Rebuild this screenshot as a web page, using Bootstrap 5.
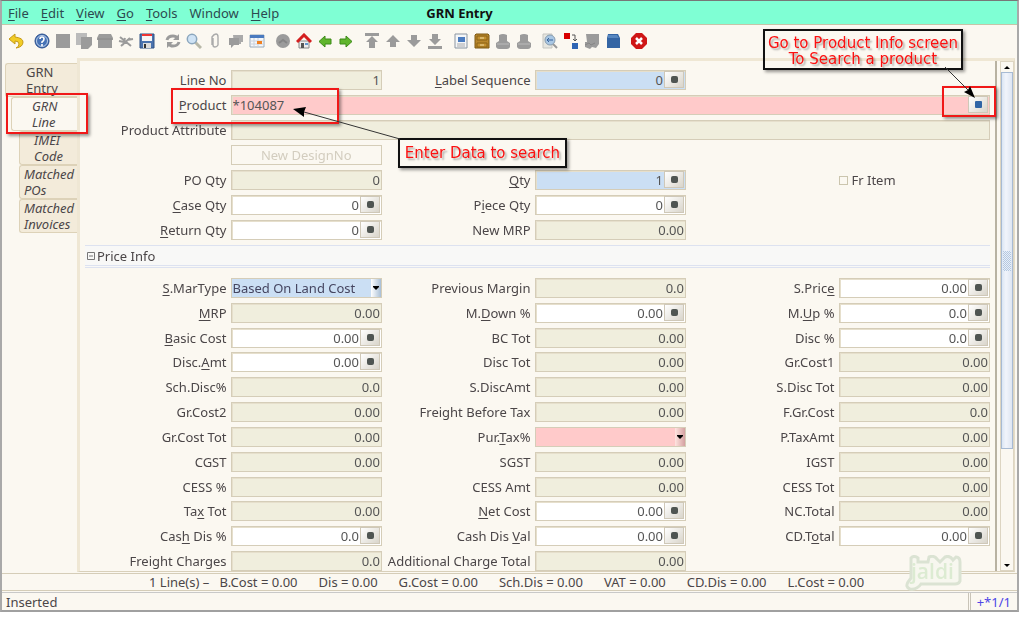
<!DOCTYPE html>
<html lang="en">
<head>
<meta charset="utf-8">
<meta name="viewport" content="width=device-width, initial-scale=1">
<title>GRN Entry</title>
<link href="https://cdn.jsdelivr.net/npm/bootstrap@5.3.0/dist/css/bootstrap.min.css" rel="stylesheet">
<style>
:root{--paper:#fbf8f1;--line:#d5cdb8;--sand:#efe7d4;--read:#f0eedd;--need:#ffcaca;--pick:#cbdff4;--ink:#4b4648}
body{font-family:"Noto Sans","Open Sans",sans-serif;font-size:13px;line-height:16px;color:var(--ink);background:#fff}
.app-window{min-height:calc(100vh - 6px);margin:0 5px 6px 0;background:var(--paper);border:1px solid #777;border-left:2px solid #a9a9a9;border-right:2px solid #a9a9a9;border-bottom:2px solid #a0a0a0}
.menu-strip{background:#7fffd4;height:24px;border-bottom:1px solid #c5c5a8;padding-left:6px}
.menu-strip a{color:#2d4a50;text-decoration:none}
u{text-underline-offset:2px}
.app-title{left:0;right:100px;top:3px;font-size:13px;line-height:18px;color:#111;pointer-events:none}
.tool-strip{height:33px;gap:10px;padding:0 6px 2px}
.tool-set{gap:5px}
.tool-btn{width:16px;height:16px;padding:0;border:0;background:none;display:flex}
.side-tabs{width:75px;padding-left:3px;padding-top:5px}
.side-tab{display:block;line-height:16px;height:34px;background:#f3ebda;border:1px solid #ddd2b8;border-right:0;border-radius:3px 0 0 3px;color:var(--ink);text-decoration:none;white-space:nowrap}
.side-tab.lvl0{padding-left:20px}
.side-tab.lvl1{margin-left:6px;padding-left:20px;background:var(--paper);font-style:italic}
.side-tab.lvl2{margin-left:14px;padding-left:4px;font-style:italic}
.side-tab.deep{padding-left:14px}
.work-panel{border:1px solid #d9d0ba;border-left:3px solid var(--sand);border-top:3px solid var(--sand);border-right-color:#e4dcc8;min-width:0;margin-right:2px}
.form-area{padding:9px 5px 0 2px;border-right:2px solid #b8b2a2}
.field-grid{display:grid;grid-template-columns:repeat(3,145fr 152fr);column-gap:4px;row-gap:5px;grid-auto-rows:20px}
.price-grid{row-gap:0;align-content:space-between}
.field-grid label{text-align:right;white-space:nowrap;line-height:20px}
.wide{grid-column:2/-1}
.box{display:flex;min-width:0;height:20px;border:1px solid var(--line);background:var(--read);box-shadow:inset 1px 1px #e6dfcc}
.box input{flex:1;min-width:0;width:0;border:0;background:none;padding:0 1px;text-align:right;font:inherit;color:#555;outline:0;line-height:18px}
.box.edit{background:#fff}.box.pick{background:var(--pick)}.box.need{background:var(--need)}
.box.need input{text-align:left}
.calc{width:20px;flex:none;border:1px solid #cfc8b8;background:linear-gradient(135deg,#fff,#d9d5cb);padding:0;margin:0 1px 1px 0;display:flex;align-items:center;justify-content:center}
.calc i{width:7px;height:7px;border-radius:2px;background:#4f5552}
.calc.prod i{background:#2f64a5;border-radius:1px}
.combo{height:20px;width:100%;appearance:none;border:1px solid var(--line);border-radius:0;padding:0 12px 0 1px;font:inherit;color:#454560;background:url("data:image/svg+xml,%3Csvg xmlns='http://www.w3.org/2000/svg' width='10' height='18'%3E%3Cpath d='M2 7h6v1L5 11 2 8z'/%3E%3C/svg%3E") right/10px 18px no-repeat,linear-gradient(90deg,#fff,#a9bfd6) right/10px 18px no-repeat,var(--pick);opacity:1}
.combo.red{background:url("data:image/svg+xml,%3Csvg xmlns='http://www.w3.org/2000/svg' width='10' height='18'%3E%3Cpath d='M2 7h6v1L5 11 2 8z'/%3E%3C/svg%3E") right/10px 18px no-repeat,linear-gradient(90deg,#ffe4e0,#d4a0a0) right/10px 18px no-repeat,var(--need)}
.plain-btn{border:1px solid var(--line);background:none;color:#d3cdbf;height:20px;padding:0;line-height:18px}
.plain-check{line-height:20px;gap:4px}
.plain-check input{appearance:none;width:9px;height:9px;border:1px solid #cbc5ae;margin:0}
.section-head{height:23px;margin:5px 0 10px 3px;border-top:1px solid #dde2f0;border-bottom:3px double #dde2f0;background:#f8f8f7;gap:2px;padding-left:2px}
.section-head button{border:0;background:none;padding:0;display:flex}
.scroll-rail{width:14px;margin-left:3px;border:1px solid #ddd5c2}
.scroll-rail button{height:10px;border:0;padding:0;background:var(--paper);display:flex;justify-content:center;align-items:center}
.rail-thumb{flex:376;background:linear-gradient(90deg,#dbe6f4,#f1f4fb 40%,#dde5f2);border:1px solid #a7bad3}
.rail-grip{width:8px;height:20px;background:repeating-conic-gradient(#b4c8e0 0 25%,#e8eef8 0 50%) 0/2px 2px}
.rail-rest{flex:111}
.sum-strip{height:18px;margin-top:1px;border-top:1px solid var(--line);border-bottom:1px solid var(--line);padding-left:147px;gap:21px;line-height:17px;white-space:nowrap}
.foot-strip{margin-top:1px;border-top:1px solid #c9c9c9;height:18px;line-height:18px}
.foot-strip .foot-count{border-left:3px double #c9c4b8;color:#4d45e6;padding:0 6px}
/* notes drawn over the form */
.note-frame{position:absolute;border:2px solid #f01818;box-shadow:2px 2px 3px #0006;pointer-events:none}
.note-text{position:absolute;border:2px solid #111;box-shadow:2px 2px 3px #0006;color:#fb1010;font:15px/16px "DejaVu Sans",sans-serif;text-align:center;text-shadow:2px 2px 2px #0005;white-space:nowrap}
.note-arrow{position:absolute;pointer-events:none}
.n-tab{left:4px;top:92px;width:82px;height:41px}
.n-product{left:169px;top:87px;width:168px;height:36px}
.n-button{right:21px;top:85px;width:54px;height:31px}
.n-enter{left:396px;top:137px;width:169px;height:30px;line-height:27px}
.n-goto{right:54px;top:28px;width:200px;height:41px;padding-top:4px}
.a-enter{left:288px;top:98px}
.a-goto{right:36px;top:64px}
.brand-mark{position:absolute;right:55px;bottom:19px}
</style>
<script src="https://cdn.jsdelivr.net/npm/bootstrap@5.3.0/dist/js/bootstrap.bundle.min.js"></script>
</head>
<body>
<div class="app-window d-flex flex-column position-relative">
  <nav class="menu-strip d-flex align-items-center position-relative" aria-label="Menu">
    <div class="d-flex" id="menus"></div>
    <h1 class="app-title position-absolute text-center fw-bold m-0">GRN Entry</h1>
  </nav>
  <div class="tool-strip d-flex align-items-center" role="toolbar" id="tools"></div>

  <div class="d-flex flex-grow-1">
    <nav class="side-tabs flex-shrink-0" aria-label="Tabs">
      <a href="#" class="side-tab lvl0">GRN<br>Entry</a>
      <a href="#" class="side-tab lvl1">GRN<br>Line</a>
      <a href="#" class="side-tab lvl2 deep">IMEI<br>Code</a>
      <a href="#" class="side-tab lvl2">Matched<br>POs</a>
      <a href="#" class="side-tab lvl2">Matched<br>Invoices</a>
    </nav>
    <main class="work-panel d-flex flex-grow-1">
      <form class="form-area d-flex flex-column flex-grow-1">
        <div class="field-grid" id="lineGrid"></div>
        <div class="section-head d-flex align-items-center">
          <button type="button" aria-label="Collapse"><svg width="8" height="8"><path d="M.5.5h7v7h-7zM2 4h4" fill="none" stroke="#777"/></svg></button>
          <span>Price Info</span>
        </div>
        <div class="field-grid price-grid flex-grow-1" id="priceGrid"></div>
      </form>
      <div class="scroll-rail d-flex flex-column">
        <button type="button" aria-label="Scroll up"><svg width="8" height="5"><path d="M1 4h6L4 1z"/></svg></button>
        <div class="rail-thumb d-flex align-items-center justify-content-center"><span class="rail-grip"></span></div>
        <div class="rail-rest"></div>
        <button type="button" aria-label="Scroll down"><svg width="8" height="5"><path d="M1 1h6L4 4z"/></svg></button>
      </div>
    </main>
  </div>

  <div class="sum-strip d-flex">
    <span>1 Line(s) –&nbsp;&nbsp; B.Cost = 0.00</span><span>Dis = 0.00</span><span>G.Cost = 0.00</span><span>Sch.Dis = 0.00</span><span>VAT = 0.00</span><span>CD.Dis = 0.00</span><span>L.Cost = 0.00</span>
  </div>
  <footer class="foot-strip d-flex justify-content-between">
    <span class="ps-1">Inserted</span><span class="foot-count">+*1/1</span>
  </footer>

  <svg class="brand-mark" width="58" height="36" aria-label="jaldi"><path d="M7 3q3-3 7 0v4h10l1-5q5-2 8 2l3 3 5-5q5-2 8 3l3-3q4 0 4 5v19q-1 3-5 3H17q-4 6-11 5-5-2-2-7l3-4z" fill="#f7f7ef" stroke="#dbe3d3" stroke-width="3"/><text x="7" y="24" font-family="Open Sans,sans-serif" font-size="21" font-weight="600" fill="#dcebd2">jaldi</text></svg>

  <div class="note-frame n-tab"></div>
  <div class="note-frame n-product"></div>
  <div class="note-frame n-button"></div>
  <div class="note-text n-enter">Enter Data to search</div>
  <div class="note-text n-goto">Go to Product Info screen<br>To Search a product</div>
  <svg class="note-arrow a-enter" width="112" height="44"><path d="M110 40 14 13" stroke="#333" fill="none"/><path d="M3 10 16 8 14 13 14 18z"/></svg>
  <svg class="note-arrow a-goto" width="40" height="36"><path d="M4 2 28 26" stroke="#333" fill="none"/><path d="M34 33 23 27 27 25 29 21z"/></svg>
</div>

<script>
// An underscore precedes the mnemonic letter of a caption.
const cap = s => s.replace(/_(.)/, '<u>$1</u>');
const menus = [['_File'],['_Edit'],['_View'],['_Go'],['_Tools'],['Window'],['_Help']];
document.getElementById('menus').innerHTML = menus.map(m => `<a href="#" class="me-2 pe-1">${cap(m[0])}</a>`).join('');

const g = '#9b9b9b';
const printer = `<path d="M4 2q4-2 8 0v6l3 2v4q-1 2-3 2H4q-2 0-3-2v-4l3-2z" fill="${g}"/><path d="M2 11h12" stroke="#bbb"/>`;
const icons = [
 [['Undo','<path d="M7 1 1 6l6 5V8q4 0 4 3t-3 4q7-1 7-6 0-4-8-5z" fill="#f2cc25" stroke="#c59a18"/>']],
 [['Help','<circle cx="8" cy="8" r="7" fill="#4672b5" stroke="#2c4f8d"/><circle cx="8" cy="8" r="5.5" fill="none" stroke="#b9cde8"/><path d="M6 6q0-2 2-2t2 2-2 3v1M8 11v2" stroke="#fff" stroke-width="1.6" fill="none"/>'],
  ['New',`<path d="M1 1h14v14H1z" fill="${g}"/>`],
  ['Copy',`<path d="M0 0h11v12H0z" fill="#bbb"/><path d="M5 4h11v8l-4 4H5z" fill="${g}"/>`],
  ['Delete',`<path d="M2 1h12l2 4v2h-1v8H1V7H0V5z" fill="${g}"/><path d="M1 6h14" stroke="#888"/>`],
  ['Clear',`<path d="m2 4 11 9M3 13l9-8M7 5l-2 7M9 7l6-1M1 8l5 1" stroke="${g}" stroke-width="2" fill="none"/>`],
  ['Save','<path d="M1 1h14v14H1z" fill="#4b73ae" stroke="#315385"/><path d="M3 1h10v7H3z" fill="#f5f5f5"/><path d="M3 1h10v2H3z" fill="#e33"/><path d="M4 10h8v5H4z" fill="#ddd"/><path d="M5 11h2v4H5z" fill="#333"/>']],
 [['Refresh',`<path d="M2 7q1-4 6-4 3 0 4 2M14 9q-1 4-6 4-3 0-4-2" stroke="${g}" stroke-width="3" fill="none"/><path d="M14 1v6H8zM2 15V9h6z" fill="${g}"/>`],
  ['Find','<path d="m9 9 6 6" stroke="#b8b8a8" stroke-width="3"/><circle cx="6" cy="6" r="4.7" fill="#cfe3f5" stroke="#8ba6bd" stroke-width="1.5"/>'],
  ['Attach','<path d="M6 5v7q0 2 2 2t3-2V4q0-3-2-3T5 4v8" stroke="#aaa" stroke-width="1.4" fill="none"/>'],
  ['Chat',`<path d="M5 2h10v7h-2v2H6z" fill="#aaa"/><path d="M1 5h10v7H6l-3 3v-3H1z" fill="${g}"/>`],
  ['Grid toggle','<path d="M1 2h14v12H1z" fill="#f5f7fa" stroke="#9ab"/><path d="M1 2h14v3H1z" fill="#4a7abf"/><path d="M1 8h14M1 11h14M5 5v9M9 5v9" stroke="#cbd2dc"/><path d="M8 8h5v3H8z" fill="#f08020"/>']],
 [['History',`<circle cx="8" cy="8" r="7" fill="${g}"/><path d="m4 10 4-3 4 3" stroke="#858585" stroke-width="2" fill="none"/>`],
  ['Home','<path d="M3 8h10v7H3z" fill="#eee" stroke="#888"/><path d="M1 9 8 2l7 7" stroke="#d42020" stroke-width="3" fill="none"/><path d="M5 10h3v5H5z" fill="#555"/><path d="M9 10h3v2H9z" fill="#69c"/>'],
  ['Back','<path d="M8 3v3h6v5H8v3L2 8.500z" fill="#60b52c" stroke="#3c8a18"/>'],
  ['Forward','<path d="M8 3v3H2v5h6v3l6-5.500z" fill="#60b52c" stroke="#3c8a18"/>']],
 [['First',`<path d="M1 0h14v3H1zM8 3l6 6h-3v6H5V9H2z" fill="${g}"/>`],
  ['Previous',`<path d="m8 2 7 7h-4v5H5V9H1z" fill="${g}"/>`],
  ['Next',`<path d="M5 2h6v5h4l-7 7-7-7h4z" fill="${g}"/>`],
  ['Last',`<path d="M5 1h6v5h3l-6 6-6-6h3zM1 13h14v3H1z" fill="${g}"/>`]],
 [['Report','<path d="M2 1h12v14H2z" fill="#f4f6f8" stroke="#8a95a0"/><path d="M5 4h7v5H5z" fill="#4b7cc0"/><path d="M4 11h8M4 13h8" stroke="#aaa"/>'],
  ['Archive','<path d="M2 1h12l1 1v13H1V2z" fill="#b8862b" stroke="#7d5813"/><path d="M3 3h10v4H3zM3 10h10v4H3z" fill="#c4912f" stroke="#8a6317"/><path d="M6 5h4M6 12h4" stroke="#ecd9a5"/>'],
  ['Print preview',printer],['Print',printer]],
 [['Zoom across','<path d="M1 1h9v14H1z" fill="#e6e6e0" stroke="#c5c5c0"/><path d="m11 11 4 4" stroke="#999" stroke-width="2"/><circle cx="8" cy="7" r="5" fill="#a9c7e4" stroke="#889cae"/><path d="M5 7h6M7 5 5 7l2 2" stroke="#37639c" fill="none"/>'],
  ['Workflow','<path d="M1 0h6v6H1z" fill="#d80000"/><path d="M9 10h6v6H9z" fill="#2f65b4"/><path d="M9 2h3v6M10 6l2 2 2-2" stroke="#555" fill="none"/>'],
  ['Requests',`<path d="M2 1h13v10l-3 4-4-1-2 2-5-2V9h2z" fill="${g}"/><path d="m1 12 4-2 2 2 4-2" stroke="#858585" fill="none"/>`],
  ['Product','<path d="M3 1h10l2 4v10H2V5z" fill="#3465a4"/><path d="M3 2h9l2 3H3z" fill="#5787c0"/>']],
 [['Exit','<path d="M5 0h6l5 5v6l-5 5H5l-5-5V5z" fill="#cf1717"/><path d="m5 5 6 6M11 5l-6 6" stroke="#fff" stroke-width="2.500"/>']]
];
document.getElementById('tools').innerHTML = icons.map(set => `<div class="tool-set d-flex">${set.map(([n,p]) =>
  `<button type="button" class="tool-btn" aria-label="${n}"><svg width="16" height="16" viewBox="0 0 16 16">${p}</svg></button>`).join('')}</div>`).join('');

// Each field: caption, value, kind (r read-only, e editable, p highlighted).
let n = 0;
function field([c, v, k = 'r']) {
  const id = 'f' + (++n), lab = `<label for="${id}">${cap(c)}</label>`;
  if (k === 'combo') return lab + `<select id="${id}" class="combo"><option>${v}</option></select>`;
  if (k === 'comboRed') return lab + `<select id="${id}" class="combo red"><option>${v}</option></select>`;
  if (k === 'search') return lab + `<div class="box need wide"><input id="${id}" value="${v}"><button type="button" class="calc prod" aria-label="Product Info"><i></i></button></div>`;
  if (k === 'long') return lab + `<div class="box wide"><input id="${id}" value="${v}" readonly></div>`;
  if (k === 'button') return `<span></span><button type="button" class="plain-btn" disabled>${c}</button>` + '<span></span>'.repeat(4);
  if (k === 'check') return `<span></span><div class="plain-check d-flex align-items-center"><input type="checkbox" id="${id}"><label for="${id}">${c}</label></div>`;
  if (k === 'none') return '<span></span><span></span>';
  const cls = {r:'', e:'edit', p:'pick'}[k];
  return lab + `<div class="box ${cls}"><input id="${id}" value="${v}"${k === 'r' ? ' readonly' : ''}>${k === 'r' ? '' : `<button type="button" class="calc" aria-label="Calculator"><i></i></button>`}</div>`;
}
const none = ['', '', 'none'], z = '0.00';
document.getElementById('lineGrid').innerHTML = [
 ['Line No','1'],['_Label Sequence','0','p'],none,
 ['_Product','*104087','search'],['Product Attribute','','long'],['New DesignNo','','button'],
 ['PO Qty','0'],['_Qty','1','p'],['Fr Item','','check'],
 ['_Case Qty','0','e'],['P_iece Qty','0','e'],none,
 ['_Return Qty','0','e'],['New MRP',z],none].map(field).join('');
document.getElementById('priceGrid').innerHTML = [
 ['_S.MarType','Based On Land Cost','combo'],['Previous Margin','0.0'],['S.Pric_e',z,'e'],
 ['_MRP',z],['M._Down %',z,'e'],['M._Up %','0.0','e'],
 ['_Basic Cost',z,'e'],['BC Tot',z],['Disc %','0.0','e'],
 ['Disc._Amt',z,'e'],['Disc Tot',z],['Gr.Cost1',z],
 ['Sch.Disc%','0.0'],['S.DiscAmt',z],['S.Disc Tot',z],
 ['Gr.Cost2',z],['Freight Before Tax',z],['F.Gr.Cost','0.0'],
 ['Gr.Cost Tot',z],['Pur._Tax%','','comboRed'],['P.TaxAmt',z],
 ['CGST',z],['SGST',z],['IGST',z],
 ['CESS %',''],['CESS Amt',z],['CESS Tot',z],
 ['Ta_x Tot',z],['_Net Cost',z,'e'],['NC.Total',z],
 ['Cas_h Dis %','0.0','e'],['Cash Dis _Val',z,'e'],['CD.T_otal',z,'e'],
 ['Freight Charges','0.0'],['Additional Charge Total',z],none].map(field).join('');
const product = document.querySelector('.need input');
product.focus();
product.setSelectionRange(7, 7);
</script>
</body>
</html>
